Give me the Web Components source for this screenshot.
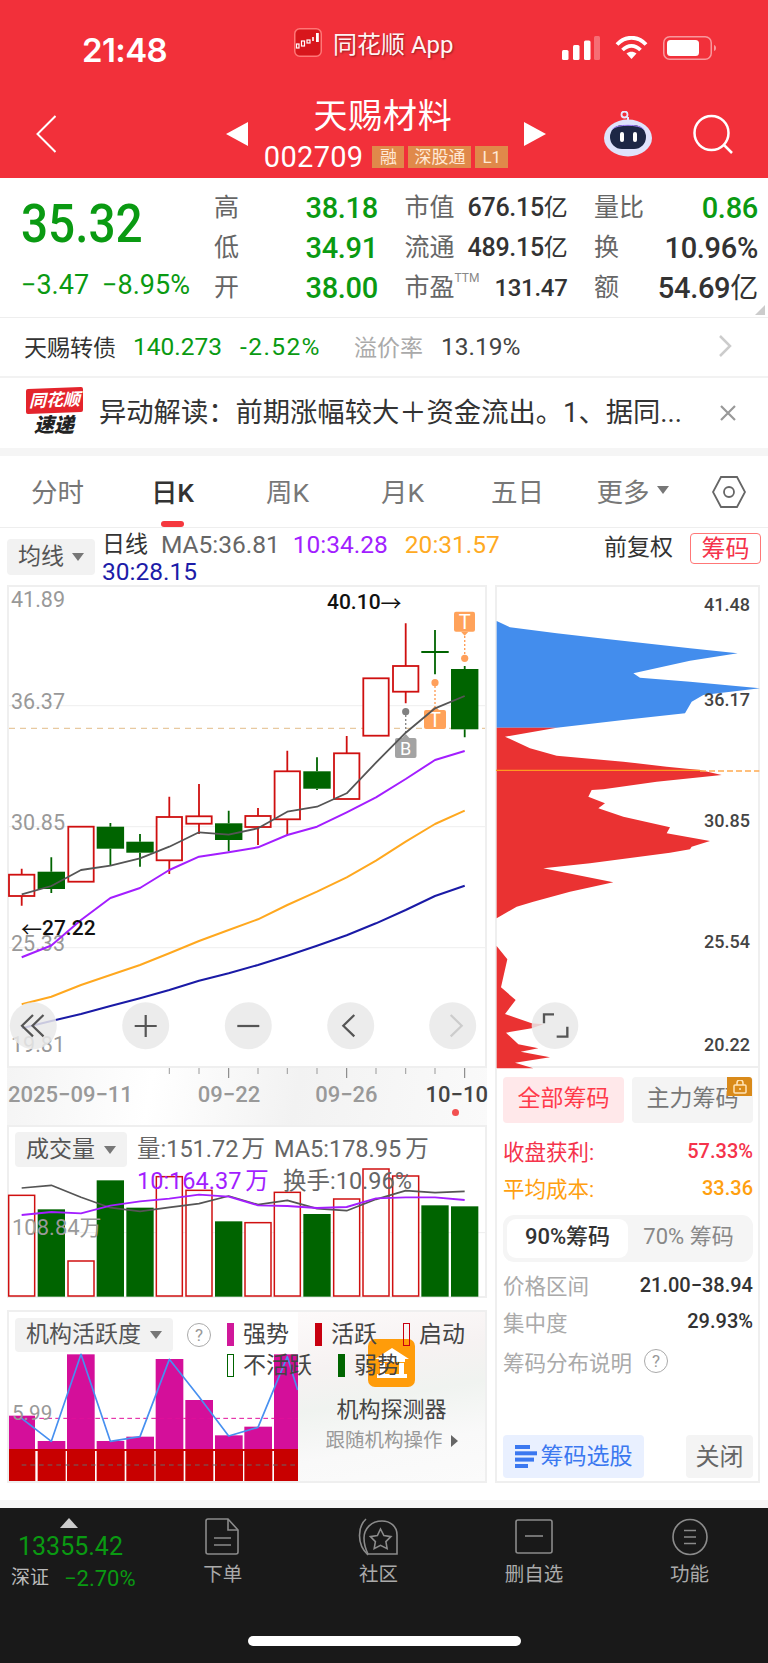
<!DOCTYPE html>
<html lang="zh">
<head>
<meta charset="utf-8">
<title>天赐材料</title>
<style>
  html, body { margin: 0; padding: 0; }
  body {
    width: 768px;
    height: 1663px;
    overflow: hidden;
    background: #fff;
    color: #333;
    font-family: Roboto, "Noto Sans CJK SC", sans-serif;
  }
  .charts {
    display: grid;
    grid-template-columns: 480px 265px;
    column-gap: 8px;
    padding-left: 7px;
    height: 915px;
    box-sizing: border-box;
  }
  .charts .left, .charts .right { display: flex; flex-direction: column; }
  .gap { display: block; height: 8px; background: #f5f5f5; }
</style>
</head>
<body>
<app-header></app-header>
<quote-panel></quote-panel>
<bond-row></bond-row>
<news-banner></news-banner>
<span class="gap"></span>
<period-tabs>
  <period-tab>分时</period-tab>
  <period-tab active>日K</period-tab>
  <period-tab>周K</period-tab>
  <period-tab>月K</period-tab>
  <period-tab>五日</period-tab>
  <period-tab more>更多</period-tab>
</period-tabs>
<ma-legend></ma-legend>
<div class="charts">
  <div class="left">
    <kline-chart></kline-chart>
    <date-axis></date-axis>
    <volume-chart></volume-chart>
    <activity-chart></activity-chart>
  </div>
  <div class="right">
    <chip-chart></chip-chart>
    <chip-panel></chip-panel>
  </div>
</div>
<span class="gap"></span>
<bottom-bar>
  <bar-item label="下单">
    <svg width="36" height="38" viewBox="0 0 36 38" fill="none" stroke="#8b8b8b" stroke-width="1.6">
      <path d="M3 1h20l10 11v22a2 2 0 0 1-2 2H3a2 2 0 0 1-2-2V3a2 2 0 0 1 2-2z"/><path d="M23 1v11h10"/><path d="M9 20h17M9 27h17"/>
    </svg>
  </bar-item>
  <bar-item label="社区">
    <svg width="42" height="38" viewBox="0 0 42 38" fill="none" stroke="#8b8b8b" stroke-width="1.6">
      <path d="M9 1C1 8-1 26 11 37"/><path d="M11 36h29V17C40 8 33 3 25 3 14 3 7 11 7 20c0 7 2 12 4 16z"/>
      <path d="M23.5 11l3.4 6.6 7 1-5 5 1.2 7-6.600-3.300-6.300 3.300 1.200-7-5-5 7-1z"/>
    </svg>
  </bar-item>
  <bar-item label="删自选">
    <svg width="38" height="36" viewBox="0 0 38 36" fill="none" stroke="#8b8b8b" stroke-width="1.6">
      <rect x="1" y="1" width="36" height="33" rx="2"/><path d="M10 17h18"/>
    </svg>
  </bar-item>
  <bar-item label="功能">
    <svg width="36" height="38" viewBox="0 0 36 38" fill="none" stroke="#8b8b8b" stroke-width="1.6">
      <ellipse cx="18" cy="19" rx="17" ry="17.500"/><path d="M12 12.500h12M12 19h12M12 25.500h12"/>
    </svg>
  </bar-item>
</bottom-bar>

<script>
const UP = '#cf1010';
const DOWN = '#006400';
const STEP = [21.7, 51.3, 81, 110.4, 140, 169.3, 199, 228.7, 258, 287.3, 317, 346.7, 376, 405.7, 435, 464.7];

function line(xs, ys, color, width) {
    const pts = xs.map((x, i) => x + ',' + ys[i]).join(' ');
    return `<polyline points="${pts}" fill="none" stroke="${color}" stroke-width="${width}" stroke-linejoin="round"/>`;
}

class AppHeader extends HTMLElement {
    connectedCallback() {
        this.attachShadow({ mode: 'open' });
        this.render();
    }

    render() {
        this.shadowRoot.innerHTML = `
            <style>
                :host { display: block; height: 178px; background: #f2303a; color: #fff; }
                .status { display: flex; align-items: center; height: 90px; padding: 10px 0 0 82px; box-sizing: border-box; }
                .time { width: 212px; font: 600 33px Inter, Roboto, sans-serif; letter-spacing: -0.6px; }
                .app { width: 268px; display: flex; align-items: center; gap: 11px; margin-top: -16px; }
                .app span { font-size: 24px; text-shadow: 1px 1px 2px rgba(0,0,0,.4); opacity: .95; }
                .sys { display: flex; align-items: center; gap: 15px; margin-top: -4px; }
                .nav { display: flex; height: 88px; padding-left: 36px; align-items: center; box-sizing: border-box; }
                .title { align-self: flex-start; width: 276px; text-align: center; margin-top: 6px; }
                .name { font-size: 34px; line-height: 40px; padding-right: 6px; letter-spacing: .8px; }
                .code { display: flex; justify-content: center; align-items: center; gap: 4px; margin-top: 10px; height: 22px; }
                .code b { font: 400 29px Roboto, sans-serif; margin-right: 5px; letter-spacing: .3px; }
                .tag { background: #e0894a; color: #ffe9d6; font-size: 17px; line-height: 22px; padding: 0 6px; }
            </style>
            <div class="status">
                <div class="time">21:48</div>
                <div class="app">
                    <svg width="28" height="29" viewBox="0 0 28 29">
                        <rect x=".75" y=".75" width="26.500" height="27.500" rx="5" fill="#d8161c" stroke="#f77" stroke-width="1.500"/>
                        <g fill="none" stroke="#fff" stroke-width="1.200">
                            <rect x="2.500" y="16" width="2.500" height="4"/><rect x="7.500" y="13" width="3" height="5"/><rect x="13" y="12" width="3" height="3"/>
                        </g>
                        <path d="M19 13v-4" stroke="#fff" stroke-width="1.600"/>
                        <rect x="22" y="5" width="2.800" height="9" fill="#fff"/>
                    </svg>
                    <span>同花顺 App</span>
                </div>
                <div class="sys">
                    <svg width="38" height="24" viewBox="0 0 38 24" fill="#fff">
                        <rect x="0" y="14" width="6.500" height="10" rx="1.500"/>
                        <rect x="11" y="9" width="6.500" height="15" rx="1.500"/>
                        <rect x="22" y="4.500" width="6.500" height="19.500" rx="1.500"/>
                        <rect x="32" y="0" width="6" height="24" rx="1.500" opacity=".3"/>
                    </svg>
                    <svg width="33" height="24" viewBox="0 0 33 24" fill="none" stroke="#fff" stroke-width="3.800">
                        <path d="M2 8.500C10-.5 23-.5 31 8.500"/>
                        <path d="M7.500 14c5.500-5.500 12.500-5.500 18 0"/>
                        <path d="M16.500 23l5-5.500c-3-2.500-7-2.500-10 0z" fill="#fff" stroke="none"/>
                    </svg>
                    <svg width="53" height="24" viewBox="0 0 53 24">
                        <rect x=".75" y=".75" width="47.500" height="22.500" rx="6" fill="none" stroke="#fff" stroke-opacity=".5" stroke-width="1.500"/>
                        <rect x="4" y="4" width="32" height="16" rx="3.500" fill="#fff"/>
                        <path d="M51 9c1.500.5 2 1.500 2 3s-.5 2.500-2 3z" fill="#fff" fill-opacity=".5"/>
                    </svg>
                </div>
            </div>
            <div class="nav">
                <svg width="20" height="38" viewBox="0 0 20 38" fill="none" stroke="#fff" stroke-width="2">
                    <path d="M19.500 1L1.500 19l18 18"/>
                </svg>
                <svg style="margin-left:170px" width="22" height="24" viewBox="0 0 22 24" fill="#fff"><path d="M22 0v24L0 12z"/></svg>
                <div class="title">
                    <div class="name">天赐材料</div>
                    <div class="code"><b>002709</b><span class="tag" style="padding:0 7.500px">融</span><span class="tag">深股通</span><span class="tag" style="padding:0 7px">L1</span></div>
                </div>
                <svg width="22" height="24" viewBox="0 0 22 24" fill="#fff"><path d="M0 0v24l22-12z"/></svg>
                <svg style="margin-left:58px" width="48" height="46" viewBox="0 0 48 46">
                    <path d="M24 10V6" stroke="#e5e8ff" stroke-width="2" fill="none"/>
                    <circle cx="20.500" cy="3.500" r="3" fill="none" stroke="#e5e8ff" stroke-width="1.800"/>
                    <ellipse cx="24" cy="27" rx="24" ry="18.500" fill="#dfe3fb"/>
                    <rect x="6" y="14" width="36" height="24" rx="12" fill="#1d2745"/>
                    <path d="M8.500 18c5-5 26-5 31 0" fill="none" stroke="#a883ff" stroke-width="1"/>
                    <rect x="16" y="21" width="4" height="10" rx="2" fill="#fff"/>
                    <rect x="29" y="21" width="4" height="10" rx="2" fill="#fff"/>
                </svg>
                <svg style="margin-left:41px" width="40" height="40" viewBox="0 0 40 40" fill="none" stroke="#fff" stroke-width="2.500">
                    <circle cx="18.500" cy="19" r="17"/><path d="M31 31l8 8"/>
                </svg>
            </div>
        `;
    }
}

class StatCell extends HTMLElement {
    connectedCallback() {
        this.attachShadow({ mode: 'open' });
        this.render();
    }

    render() {
        const label = this.getAttribute('label') || '';
        const color = this.getAttribute('color') || '#333';
        const size = this.getAttribute('size') || '29';
        this.shadowRoot.innerHTML = `
            <style>
                :host { display: flex; align-items: center; justify-content: space-between; height: 40px; }
                .label { font-size: 25px; line-height: 36px; color: #666; }
                .value { font-size: ${size}px; line-height: 36px; font-weight: 500; color: ${color}; letter-spacing: -0.3px; }
                ::slotted(sup) { font-size: 12px; line-height: 0; font-weight: 400; color: #888; vertical-align: 14px; margin-right: 12px; }
                ::slotted(small) { font-size: ${parseInt(size) - 1}px; font-weight: 400; }
            </style>
            <span class="label">${label}<slot name="note"></slot></span>
            <span class="value"><slot></slot></span>
        `;
    }
}

class QuotePanel extends HTMLElement {
    connectedCallback() {
        this.attachShadow({ mode: 'open' });
        this.render();
    }

    render() {
        this.shadowRoot.innerHTML = `
            <style>
                :host { display: flex; position: relative; height: 140px; box-sizing: border-box; border-bottom: 1px solid #eee; padding: 10px 0 0 21px; }
                .left { width: 193px; color: #0a9a12; }
                .price { font-size: 53px; font-weight: 500; line-height: 60px; margin-top: 6px; transform: scaleX(.9); transform-origin: left; }
                .chg { display: flex; gap: 13px; font-size: 27px; font-weight: 400; margin-top: 14px; line-height: 34px; }
                .grid { display: grid; grid-template-columns: 164px 163px 164px; grid-auto-rows: 40px; align-content: start; column-gap: 26.500px; }
                .corner { position: absolute; right: 3px; bottom: 2px; width: 0; height: 0; border-left: 10px solid transparent; border-bottom: 10px solid #ccc; }
            </style>
            <div class="left">
                <div class="price">35.32</div>
                <div class="chg"><span>−3.47</span><span>−8.95%</span></div>
            </div>
            <div class="grid">
                <stat-cell label="高" color="#0a9a12">38.18</stat-cell>
                <stat-cell label="市值" size="25">676.15<small>亿</small></stat-cell>
                <stat-cell label="量比" color="#0a9a12">0.86</stat-cell>
                <stat-cell label="低" color="#0a9a12">34.91</stat-cell>
                <stat-cell label="流通" size="25">489.15<small>亿</small></stat-cell>
                <stat-cell label="换">10.96%</stat-cell>
                <stat-cell label="开" color="#0a9a12">38.00</stat-cell>
                <stat-cell label="市盈" size="24"><sup slot="note">TTM</sup>131.47</stat-cell>
                <stat-cell label="额">54.69<small>亿</small></stat-cell>
            </div>
            <i class="corner"></i>
        `;
    }
}

class BondRow extends HTMLElement {
    connectedCallback() {
        this.attachShadow({ mode: 'open' });
        this.render();
    }

    render() {
        this.shadowRoot.innerHTML = `
            <style>
                :host { display: flex; align-items: center; height: 60px; box-sizing: border-box; padding: 0 36px 2px 24px; border-bottom: 2px solid #f2f2f2; font-size: 23px; }
                .num { font-size: 24.500px; color: #0a9a12; }
                .muted { color: #aaa; font-size: 23px; margin-left: 33px; }
                .rate { font-size: 24.500px; color: #444; margin-left: 18px; flex: 1; }
            </style>
            <span>天赐转债</span>
            <span class="num" style="margin-left:17px">140.273</span>
            <span class="num" style="margin-left:18px;letter-spacing:1.400px">-2.52%</span>
            <span class="muted">溢价率</span>
            <span class="rate">13.19%</span>
            <svg width="14" height="22" viewBox="0 0 14 22" fill="none" stroke="#ccc" stroke-width="2.500"><path d="M2 1l10 10L2 21"/></svg>
        `;
    }
}

class NewsBanner extends HTMLElement {
    connectedCallback() {
        this.attachShadow({ mode: 'open' });
        this.render();
    }

    render() {
        this.shadowRoot.innerHTML = `
            <style>
                :host { display: flex; align-items: center; height: 70px; box-sizing: border-box; padding-left: 25px; }
                .logo { width: 58px; height: 50px; display: flex; flex-direction: column; align-items: center; }
                .tag { width: 57px; height: 25px; background: #e4242c; color: #fff; font-size: 17px; font-weight: 700; font-style: italic; line-height: 25px; text-align: center; border-radius: 2px; transform: skewY(-2deg); white-space: nowrap; }
                .sub { font-size: 20px; line-height: 24px; font-weight: 900; font-style: italic; color: #222; }
                .text { margin-left: 16px; width: 601px; font-size: 27.300px; line-height: 36px; margin-top: -1px; color: #333; white-space: nowrap; }
            </style>
            <div class="logo"><div class="tag">同花顺</div><div class="sub">速递</div></div>
            <div class="text">异动解读：前期涨幅较大＋资金流出。1、据同...</div>
            <svg style="margin-left:20px" width="16" height="16" viewBox="0 0 16 16" fill="none" stroke="#999" stroke-width="2.200"><path d="M1 1l14 14M15 1L1 15"/></svg>
        `;
    }
}

class PeriodTab extends HTMLElement {
    connectedCallback() {
        this.attachShadow({ mode: 'open' });
        this.render();
    }

    render() {
        const active = this.hasAttribute('active');
        const more = this.hasAttribute('more');
        this.shadowRoot.innerHTML = `
            <style>
                :host { display: flex; align-items: center; justify-content: center; gap: 7px; position: relative; font-size: 26.500px; padding-bottom: 3px; color: ${active ? '#333' : '#777'}; font-weight: ${active ? 500 : 400}; }
                .bar { position: absolute; left: 46px; bottom: 0; width: 23px; height: 6px; border-radius: 3px; background: #f5383e; }
                .arrow { width: 0; height: 0; border: 6px solid transparent; border-top: 8px solid #777; border-bottom: 0; }
            </style>
            <slot></slot>
            ${more ? '<i class="arrow"></i>' : ''}
            ${active ? '<i class="bar"></i>' : ''}
        `;
    }
}

class PeriodTabs extends HTMLElement {
    connectedCallback() {
        this.attachShadow({ mode: 'open' });
        this.render();
    }

    render() {
        this.shadowRoot.innerHTML = `
            <style>
                :host { display: grid; grid-template-columns: repeat(6, 115px) 1fr; height: 72px; box-sizing: border-box; border-bottom: 1px solid #eee; }
                svg { align-self: center; margin: 0 0 0 22px; }
            </style>
            <slot></slot>
            <svg width="34" height="32" viewBox="0 0 34 32" fill="none" stroke="#666" stroke-width="1.800">
                <path d="M9 1h16l8 15-8 15H9L1 16z"/><circle cx="17" cy="16" r="5"/>
            </svg>
        `;
    }
}

class MaLegend extends HTMLElement {
    connectedCallback() {
        this.attachShadow({ mode: 'open' });
        this.render();
    }

    render() {
        this.shadowRoot.innerHTML = `
            <style>
                :host { display: flex; height: 57px; box-sizing: border-box; padding-left: 7px; font-size: 24.500px; }
                .pick { margin-top: 11px; width: 88px; height: 36px; background: #f2f2f2; border-radius: 4px; display: flex; align-items: center; justify-content: center; gap: 8px; color: #555; font-size: 23px; line-height: 30px; }
                .pick i { width: 0; height: 0; border: 6px solid transparent; border-top: 8px solid #777; border-bottom: 0; }
                .vals { margin-left: 7px; width: 502px; display: flex; flex-wrap: wrap; column-gap: 13px; line-height: 27px; padding-top: 3px; align-content: flex-start; box-sizing: border-box; }
                .fq { width: 86px; margin-top: 6px; line-height: 27px; color: #333; }
                .chip { margin-top: 5px; width: 71px; height: 31px; box-sizing: border-box; border: 1.500px solid #f77; border-radius: 4px; color: #f5334b; display: flex; align-items: center; justify-content: center; font-size: 24px; line-height: 28px; }
            </style>
            <div class="pick">均线<i></i></div>
            <div class="vals">
                <span style="color:#333;font-size:23px">日线</span>
                <span style="color:#666">MA5:36.81</span>
                <span style="color:#a21eff">10:34.28</span>
                <span style="color:#ffaa22;margin-left:4px">20:31.57</span>
                <span style="color:#1c1ca8;width:200px">30:28.15</span>
            </div>
            <div class="fq" style="font-size:23px">前复权</div>
            <div class="chip">筹码</div>
        `;
    }
}

class KlineChart extends HTMLElement {
    connectedCallback() {
        this.attachShadow({ mode: 'open' });
        this.render();
    }

    candles() {
        // top, bottom, wick top, wick bottom, up?
        const data = [
            [874.7, 896, 868.7, 905.7, 1], [871.7, 889, 857.3, 893, 0], [826.7, 881.7, 826.7, 881.7, 1],
            [826.7, 848.7, 823, 865, 0], [841.7, 852.7, 834, 866.7, 0], [817, 860.3, 796.7, 874, 1],
            [816.3, 823.7, 784, 834, 1], [823.3, 840, 810.7, 851.3, 0], [816, 827, 808, 845, 1],
            [771.3, 819.3, 750.7, 835, 1], [771.3, 788.7, 757.3, 790, 0], [753.3, 799, 736, 799, 1],
            [678.3, 735.7, 678.3, 735.7, 1], [666, 691.7, 623.3, 703.3, 1], [651, 653, 630, 674.3, 0],
            [669, 729.3, 666, 737.3, 0]
        ];
        return data.map((d, i) => {
            const x = STEP[i];
            const c = d[4] ? UP : DOWN;
            const wick = `<path d="M${x} ${d[2]}V${d[0]}M${x} ${d[1]}V${d[3]}" stroke="${c}" stroke-width="1.800"/>`;
            const body = d[4]
                ? `<rect x="${x - 12.7}" y="${d[0]}" width="25.400" height="${d[1] - d[0]}" fill="#fff" stroke="${c}" stroke-width="1.800"/>`
                : `<rect x="${x - 13.700}" y="${d[0]}" width="27.400" height="${d[1] - d[0]}" fill="${c}"/>`;
            return wick + body;
        }).join('');
    }

    render() {
        const ma5 = [894.3, 886, 870, 865.7, 858.3, 846.7, 832.3, 834.7, 828.3, 811.7, 806.7, 793.3, 762.7, 732.7, 708.3, 696];
        const ma10 = [957.3, 945.5, 920, 898, 888, 870, 856.7, 852.3, 847.3, 835, 826.7, 812.3, 797.3, 779, 760, 751];
        const ma20 = [1004.3, 996.7, 985, 975, 965, 953.3, 941, 930, 919.3, 905, 891.7, 877.3, 860.7, 841.7, 824, 810.7];
        const ma30 = [1028.3, 1021, 1014, 1006, 998.3, 990, 980.7, 973.3, 965, 955.7, 945.7, 935.3, 923.3, 910, 896, 885.7];
        const axis = [['41.89', 599], ['36.37', 701], ['30.85', 822], ['25.33', 943], ['19.81', 1044]];
        const btn = [33.3, 145.7, 248.3, 350.7, 452.7];
        this.shadowRoot.innerHTML = `
            <style>
                :host { display: block; height: 483px; box-sizing: border-box; border: 2px solid #efefef; }
                svg { display: block; overflow: visible; font-family: Roboto, "Noto Sans CJK SC", sans-serif; }
            </style>
            <svg width="476" height="479" viewBox="9 587 476 479">
                <path d="M9 705.700H485M9 826.700H485M9 947.700H485" stroke="#eee" stroke-width="1"/>
                <path d="M9 728.300H485" stroke="#e8c9a0" stroke-width="1.200" stroke-dasharray="6 5"/>
                ${axis.map(a => `<text x="11" y="${a[1]}" dominant-baseline="central" font-size="21.500" fill="#999">${a[0]}</text>`).join('')}
                ${this.candles()}
                <g fill="none" stroke-dasharray="2 2" stroke-width="1.400">
                    <path d="M464.700 632V655" stroke="#ff9f5a"/><path d="M435 686V708" stroke="#ff9f5a"/><path d="M405.700 715V738" stroke="#888"/>
                </g>
                <circle cx="464.700" cy="658.300" r="3.600" fill="#ff9f5a"/>
                <circle cx="435" cy="682.700" r="3.600" fill="#ff9f5a"/>
                <circle cx="405.700" cy="711.700" r="3.600" fill="#808080"/>
                <g>
                    <rect x="424" y="710" width="22" height="19" rx="2" fill="#ffa25a"/><path d="M431 710l4-4 4 4z" fill="#ffa25a"/>
                    <text x="435" y="719.500" text-anchor="middle" dominant-baseline="central" font-size="20" fill="#fff">T</text>
                    <rect x="454" y="611.700" width="21" height="20" rx="2" fill="#ffa25a"/><path d="M461 631.700l3.700 4 3.700-4z" fill="#ffa25a"/>
                    <text x="464.700" y="622" text-anchor="middle" dominant-baseline="central" font-size="20" fill="#fff">T</text>
                    <rect x="395" y="738" width="21.500" height="20" rx="2" fill="#a3a3a3"/><path d="M402 738l3.700-4 3.700 4z" fill="#a3a3a3"/>
                    <text x="405.700" y="748" text-anchor="middle" dominant-baseline="central" font-size="18" fill="#fff">B</text>
                </g>
                ${line(STEP, ma30, '#1a1aa6', 2)}
                ${line(STEP, ma20, '#ffa81f', 2)}
                ${line(STEP, ma10, '#a31eff', 2)}
                ${line(STEP, ma5, '#555', 1.8)}
                <text x="327" y="602" dominant-baseline="central" font-size="21" font-weight="500" fill="#111">40.10<tspan font-family="Noto Sans CJK SC" font-weight="400">→</tspan></text>
                <text x="21" y="928" dominant-baseline="central" font-size="21" font-weight="500" fill="#111"><tspan font-family="Noto Sans CJK SC" font-weight="400">←</tspan>27.22</text>
                ${btn.map(x => `<circle cx="${x}" cy="1025.700" r="23.500" fill="#e9e9e9" fill-opacity=".85"/>`).join('')}
                <g fill="none" stroke="#555" stroke-width="2.200">
                    <path d="M33 1015l-11 10.700 11 10.700M43.500 1015l-11 10.700 11 10.700"/>
                    <path d="M145.700 1015v22M134.700 1026h22"/>
                    <path d="M237.300 1026h22"/>
                    <path d="M354.300 1015l-11 10.700 11 10.700"/>
                    <path d="M450.700 1015l11 10.700-11 10.700" stroke="#ccc"/>
                </g>
            </svg>
        `;
    }
}

class DateAxis extends HTMLElement {
    connectedCallback() {
        this.attachShadow({ mode: 'open' });
        this.render();
    }

    render() {
        const ticks = STEP.slice(5).map((x, i) => {
            const tall = i === 2 || i === 6 || i === 10;
            return `<path d="M${x} 0V${tall ? 10 : 6}" stroke="${tall ? '#777' : '#999'}" stroke-width="1"/>`;
        }).join('');
        this.shadowRoot.innerHTML = `
            <style>
                :host { display: block; height: 57px; background: linear-gradient(100deg, #f4f4f4, #fff 30%, #f2f2f2 60%, #fafafa); }
                svg { display: block; }
                .row { display: flex; font-size: 22px; font-weight: 500; color: #999; line-height: 30px; margin-top: 2px; white-space: nowrap; }
                .dot { width: 7px; height: 7px; border-radius: 50%; background: #f25050; margin: -1px 0 0 445px; }
            </style>
            <svg width="480" height="10" viewBox="7 0 480 10">${ticks}</svg>
            <div class="row">
                <span style="margin-left:1px">2025−09−11</span>
                <span style="margin-left:65px">09−22</span>
                <span style="margin-left:55px">09−26</span>
                <span style="margin-left:48px;color:#444">10−10</span>
            </div>
            <div class="dot"></div>
        `;
    }
}

class VolumeChart extends HTMLElement {
    connectedCallback() {
        this.attachShadow({ mode: 'open' });
        this.render();
    }

    render() {
        const xs = [65, 154, 243, 331, 420, 508, 597, 686, 774, 862, 951, 1040, 1128, 1217, 1305, 1394];
        const tops = [226, 268, 423, 181, 263, 170, 211, 304, 308, 217, 282, 237, 147, 168, 256, 259];
        const up = [1, 0, 1, 0, 0, 1, 1, 0, 1, 1, 0, 1, 1, 1, 0, 0];
        const ma5 = [204, 196, 232, 263, 274, 262, 251, 228, 254, 241, 266, 272, 238, 212, 218, 214];
        const ma10 = [285, 276, 280, 257, 244, 236, 224, 230, 256, 258, 264, 261, 235, 232, 232, 240];
        const bars = xs.map((x, i) => up[i]
            ? `<rect x="${x - 39}" y="${tops[i]}" width="78" height="${528 - tops[i]}" fill="#fff" stroke="${UP}" stroke-width="4.500"/>`
            : `<rect x="${x - 41}" y="${tops[i]}" width="82" height="${530 - tops[i]}" fill="${DOWN}"/>`).join('');
        this.shadowRoot.innerHTML = `
            <style>
                :host { display: block; position: relative; height: 173px; box-sizing: border-box; border: 2px solid #efefef; font-size: 23.500px; }
                svg { display: block; overflow: visible; }
                .pick { position: absolute; left: 6px; top: 5px; width: 112px; height: 35px; background: #f2f2f2; border-radius: 4px; display: flex; align-items: center; justify-content: center; gap: 9px; color: #555; font-size: 23px; line-height: 30px; }
                .pick i { width: 0; height: 0; border: 6px solid transparent; border-top: 8px solid #777; border-bottom: 0; }
                .txt { position: absolute; white-space: pre; line-height: 28px; color: #666; }
                .ref { left: 3px; top: 87px; color: #999; font-size: 22px; }
            </style>
            <svg width="476" height="169" viewBox="27 21 1428 507">
                <path d="M27 338H1455" stroke="#eee" stroke-width="3"/>
                ${bars}
                ${line(xs, ma5, '#555', 5)}
                ${line(xs, ma10, '#a31eff', 5.5)}
            </svg>
            <div class="pick">成交量<i></i></div>
            <div class="txt" style="left:128px;top:8px">量:151.72<span style="margin-left:3px">万</span></div>
            <div class="txt" style="left:265px;top:8px">MA5:178.95<span style="margin-left:4px">万</span></div>
            <div class="txt" style="left:128px;top:40px;color:#a21eff">10:164.37<span style="margin-left:4px">万</span></div>
            <div class="txt" style="left:274px;top:40px">换手:10.96%</div>
            <div class="txt ref">108.84万</div>
        `;
    }
}

class HelpMark extends HTMLElement {
    connectedCallback() {
        this.attachShadow({ mode: 'open' });
        this.render();
    }

    render() {
        this.shadowRoot.innerHTML = `
            <style>
                :host { display: inline-flex; align-items: center; justify-content: center; width: 24px; height: 24px; box-sizing: border-box; border: 1.800px solid #aaa; border-radius: 50%; color: #999; font-size: 17px; line-height: 1; }
            </style>?
        `;
    }
}

class LegendKey extends HTMLElement {
    connectedCallback() {
        this.attachShadow({ mode: 'open' });
        this.render();
    }

    render() {
        const color = this.getAttribute('color');
        const hollow = this.hasAttribute('hollow');
        this.shadowRoot.innerHTML = `
            <style>
                :host { display: inline-flex; align-items: center; gap: 9px; font-size: 23px; color: #444; line-height: 31px; }
                i { width: 7px; height: 23px; box-sizing: border-box; background: ${hollow ? 'transparent' : color}; border: 1.500px solid ${color}; }
            </style>
            <i></i><slot></slot>
        `;
    }
}

class ActivityChart extends HTMLElement {
    connectedCallback() {
        this.attachShadow({ mode: 'open' });
        this.render();
    }

    render() {
        const lefts = [22, 113, 201, 290, 379, 467, 556, 645, 733, 822];
        const tops = [347, 423, 163, 423, 410, 177, 300, 406, 380, 163];
        const lx = [65, 154, 243, 331, 420, 508, 597, 686, 774, 862, 893];
        const ly = [355, 424, 163, 424, 410, 178, 290, 408, 382, 170, 270];
        const mag = lefts.map((x, i) => `<rect x="${x}" y="${tops[i]}" width="83" height="${447 - tops[i]}" fill="#d40f9a"/>`).join('');
        const red = lefts.map(x => `<rect x="${x}" y="452" width="84" height="96" fill="#c80000"/>`).join('');
        this.shadowRoot.innerHTML = `
            <style>
                :host { display: block; position: relative; height: 173px; margin-top: 12px; box-sizing: border-box; border: 2px solid #efefef; overflow: hidden; }
                svg { display: block; overflow: visible; font-family: Roboto, sans-serif; }
                .panel { position: absolute; left: 289px; top: 0; right: 0; bottom: 0; background: linear-gradient(170deg, #fdfafa, #f6f2f2 30%, #f0f3f0 50%, #f9f9f9 75%, #fbfbfb); display: flex; flex-direction: column; align-items: center; padding-top: 27px; box-sizing: border-box; }
                .house { width: 47px; height: 48px; border-radius: 7px; background: #ff9c0a; display: flex; align-items: center; justify-content: center; }
                .pt { font-size: 22px; color: #444; margin-top: 7px; line-height: 32px; }
                .ps { font-size: 19.500px; color: #999; line-height: 26px; margin-top: 2px; display: flex; align-items: center; gap: 8px; }
                .ps i { width: 0; height: 0; border: 6px solid transparent; border-left: 7px solid #666; border-right: 0; }
                .head { position: absolute; left: 6px; top: 6px; display: flex; align-items: center; }
                .pick { width: 158px; height: 34px; background: #f2f2f2; border-radius: 4px; display: flex; align-items: center; justify-content: center; gap: 9px; color: #555; font-size: 23px; line-height: 30px; }
                .pick i { width: 0; height: 0; border: 6px solid transparent; border-top: 8px solid #777; border-bottom: 0; }
                .legend { position: absolute; left: 218px; top: 7px; width: 256px; display: flex; flex-wrap: wrap; }
                .legend legend-key { margin-right: 26px; }
                help-mark { margin-left: 14px; }
            </style>
            <svg width="476" height="169" viewBox="27 36 1428 507">
                ${mag}
                <rect x="22" y="447" width="880" height="6" fill="#c80000"/>
                ${red}
                <path d="M22 355H900" stroke="#e0109a" stroke-width="3" stroke-dasharray="14 10"/>
                <path d="M65 495H900" stroke="#666" stroke-width="3.500" stroke-dasharray="14 12"/>
                ${line(lx, ly, '#4790f0', 5)}
                <text x="36" y="339" dominant-baseline="central" font-size="62" fill="#999">5.99</text>
            </svg>
            <div class="panel">
                <div class="house">
                    <svg width="34" height="32" viewBox="0 0 34 32" fill="#fff"><path d="M17 1L0 12h4v3h26v-3h4z"/><path d="M5 16h5v11H5zM24 16h5v11h-5z"/><rect x="2" y="27" width="30" height="4"/></svg>
                </div>
                <div class="pt">机构探测器</div>
                <div class="ps">跟随机构操作<i></i></div>
            </div>
            <div class="head"><div class="pick">机构活跃度<i></i></div><help-mark></help-mark></div>
            <div class="legend">
                <legend-key color="#d0189a">强势</legend-key>
                <legend-key color="#c80010">活跃</legend-key>
                <legend-key color="#c80010" hollow style="margin-right:0">启动</legend-key>
                <legend-key color="#006400" hollow>不活跃</legend-key>
                <legend-key color="#006400">弱势</legend-key>
            </div>
        `;
    }
}

class ChipChart extends HTMLElement {
    connectedCallback() {
        this.attachShadow({ mode: 'open' });
        this.render();
    }

    render() {
        const blue = '20,123 60,142 200,160 350,177 600,205 743,220 600,242 430,280 450,293 600,305 810,325 640,345 605,365 585,400 400,420 200,443 20,443';
        const red = '20,443 200,443 45,470 120,505 200,527 400,545 530,560 630,570 695,585 500,605 340,628 305,630 295,650 345,670 325,685 400,710 540,742 530,760 660,783 605,800 600,808 540,818 300,850 160,865 370,907 240,935 130,965 80,980 20,1015';
        const tail = '20,1098 52,1138 33,1222 77,1260 45,1302 125,1330 160,1333 125,1345 48,1358 85,1393 145,1405 92,1415 180,1432 75,1448 130,1465 20,1465';
        const labels = [['41.48', 72], ['36.17', 357], ['30.85', 720], ['25.54', 1083], ['20.22', 1393]];
        this.shadowRoot.innerHTML = `
            <style>
                :host { display: block; height: 483px; box-sizing: border-box; border: 2px solid #efefef; }
                svg { display: block; overflow: visible; font-family: Roboto, sans-serif; }
            </style>
            <svg width="261" height="479" viewBox="21 21 783 1437">
                <polygon points="${blue}" fill="#438ded"/>
                <polygon points="${red}" fill="#ea3232"/>
                <polygon points="${tail}" fill="#ea3232"/>
                <path d="M18 571H630" stroke="#ff9a20" stroke-width="4"/>
                <path d="M630 573H808" stroke="#ffab50" stroke-width="4" stroke-dasharray="18 9"/>
                ${labels.map(l => `<text x="642" y="${l[1]}" dominant-baseline="central" font-size="54" font-weight="500" fill="#444">${l[0]}</text>`).join('')}
                <circle cx="195" cy="1337" r="70" fill="#e9e9e9" fill-opacity=".85"/>
                <path d="M192 1303H162V1330M232 1340V1370H200" fill="none" stroke="#555" stroke-width="7"/>
            </svg>
        `;
    }
}

class ChipRow extends HTMLElement {
    connectedCallback() {
        this.attachShadow({ mode: 'open' });
        this.render();
    }

    render() {
        const label = this.getAttribute('label') || '';
        const color = this.getAttribute('color') || '#aaa';
        const value = this.getAttribute('value-color') || '#333';
        const h = this.getAttribute('height') || '36';
        this.shadowRoot.innerHTML = `
            <style>
                :host { display: flex; align-items: center; justify-content: space-between; height: ${h}px; font-size: 21.500px; box-sizing: border-box; padding-bottom: 2px; }
                .l { color: ${color}; }
                .v { color: ${value}; font-size: 20px; font-weight: 500; }
            </style>
            <span class="l">${label}</span><span class="v"><slot></slot></span>
        `;
    }
}

class ChipPanel extends HTMLElement {
    connectedCallback() {
        this.attachShadow({ mode: 'open' });
        this.render();
    }

    render() {
        this.shadowRoot.innerHTML = `
            <style>
                :host { display: flex; flex-direction: column; height: 415px; box-sizing: border-box; padding: 9px 5px 3px 6px; border: solid #efefef; border-width: 0 2px 2px 2px; }
                .tabs { display: grid; grid-template-columns: 121px 121px; column-gap: 8px; height: 46px; }
                .tab { position: relative; display: flex; align-items: center; justify-content: center; font-size: 23px; line-height: 30px; background: #f4f4f4; color: #777; border-radius: 4px; padding-bottom: 2px; box-sizing: border-box; }
                .tab.on { background: #ffe8ea; color: #ff3a4a; }
                .lock { position: absolute; right: 1px; top: 0; width: 25px; height: 19px; background: #d98a1a; border-radius: 0 3px 0 0; display: flex; align-items: center; justify-content: center; }
                .rows { margin-top: 10px; margin-bottom: 8px; }
                .seg { display: grid; grid-template-columns: 121px 1fr; height: 47px; background: #f5f5f5; border-radius: 11px; padding: 4px; box-sizing: border-box; font-size: 22px; line-height: 30px; }
                .seg div { display: flex; align-items: center; justify-content: center; color: #888; padding-bottom: 3px; box-sizing: border-box; }
                .seg .on { background: #fff; border-radius: 9px; color: #333; font-weight: 500; }
                .info { margin-top: 5px; }
                .help { display: flex; align-items: center; gap: 12px; height: 36px; margin-top: 4px; font-size: 21.500px; color: #aaa; padding-bottom: 2px; box-sizing: border-box; }
                .foot { margin-top: auto; display: flex; justify-content: space-between; height: 43px; }
                .pick { width: 141px; background: #e9f0ff; color: #3b78f0; border-radius: 4px; display: flex; align-items: center; justify-content: center; gap: 4px; font-size: 23px; line-height: 30px; }
                .close { width: 67px; background: #f4f4f4; color: #666; border-radius: 4px; display: flex; align-items: center; justify-content: center; font-size: 24px; line-height: 30px; }
            </style>
            <div class="tabs">
                <div class="tab on">全部筹码</div>
                <div class="tab">主力筹码
                    <span class="lock">
                        <svg width="14" height="14" viewBox="0 0 14 14" fill="none" stroke="#ffe4b8" stroke-width="1.500"><rect x="1" y="5" width="12" height="8" rx="1"/><path d="M4 5V3a3 3 0 0 1 6 0v2"/><path d="M7 8v2"/></svg>
                    </span>
                </div>
            </div>
            <div class="rows">
                <chip-row height="37" label="收盘获利:" color="#f5334b" value-color="#f5334b">57.33%</chip-row>
                <chip-row height="37" label="平均成本:" color="#ffa010" value-color="#ffa010">33.36</chip-row>
            </div>
            <div class="seg"><div class="on">90%筹码</div><div>70% 筹码</div></div>
            <div class="info">
                <chip-row height="37" label="价格区间">21.00−38.94</chip-row>
                <chip-row label="集中度">29.93%</chip-row>
                <div class="help">筹码分布说明<help-mark></help-mark></div>
            </div>
            <div class="foot">
                <div class="pick">
                    <svg width="22" height="23" viewBox="0 0 22 23" fill="#3b78f0"><rect y="0" width="15" height="4"/><rect y="6.300" width="22" height="4"/><rect y="12.600" width="19" height="4"/><rect y="19" width="13" height="4"/></svg>
                    <span>筹码选股</span>
                </div>
                <div class="close">关闭</div>
            </div>
        `;
    }
}

class BarItem extends HTMLElement {
    connectedCallback() {
        this.attachShadow({ mode: 'open' });
        this.render();
    }

    render() {
        this.shadowRoot.innerHTML = `
            <style>
                :host { display: flex; flex-direction: column; align-items: center; width: 155.600px; padding-top: 10px; box-sizing: border-box; }
                .icon { height: 38px; display: flex; align-items: center; justify-content: center; }
                .label { color: #aaa; font-size: 19.500px; line-height: 26px; margin-top: 6px; }
            </style>
            <div class="icon"><slot></slot></div>
            <div class="label">${this.getAttribute('label')}</div>
        `;
    }
}

class BottomBar extends HTMLElement {
    connectedCallback() {
        this.attachShadow({ mode: 'open' });
        this.render();
    }

    render() {
        this.shadowRoot.innerHTML = `
            <style>
                :host { display: flex; flex-direction: column; height: 155px; background: #191919; }
                .top { display: flex; height: 128px; }
                .index { width: 145px; box-sizing: border-box; padding: 10px 0 0 11px; }
                .tri { width: 0; height: 0; margin-left: 49px; border: 9px solid transparent; border-bottom: 10px solid #ccc; border-top: 0; }
                .num { color: #0a9a12; font-size: 25px; line-height: 30px; margin: 4px 0 0 7px; }
                .sub { display: flex; align-items: center; gap: 15px; color: #bbb; font-size: 19px; line-height: 30px; margin-top: 1px; }
                .sub b { font: 400 22px Roboto, sans-serif; color: #0a9a12; }
                .items { display: flex; }
                .home { width: 273px; height: 10px; border-radius: 5px; background: #fff; margin-left: 248px; }
            </style>
            <div class="top">
                <div class="index">
                    <div class="tri"></div>
                    <div class="num">13355.42</div>
                    <div class="sub"><span>深证</span><b>−2.70%</b></div>
                </div>
                <div class="items"><slot></slot></div>
            </div>
            <div class="home"></div>
        `;
    }
}

customElements.define('app-header', AppHeader);
customElements.define('stat-cell', StatCell);
customElements.define('quote-panel', QuotePanel);
customElements.define('bond-row', BondRow);
customElements.define('news-banner', NewsBanner);
customElements.define('period-tab', PeriodTab);
customElements.define('period-tabs', PeriodTabs);
customElements.define('ma-legend', MaLegend);
customElements.define('kline-chart', KlineChart);
customElements.define('date-axis', DateAxis);
customElements.define('volume-chart', VolumeChart);
customElements.define('help-mark', HelpMark);
customElements.define('legend-key', LegendKey);
customElements.define('activity-chart', ActivityChart);
customElements.define('chip-chart', ChipChart);
customElements.define('chip-row', ChipRow);
customElements.define('chip-panel', ChipPanel);
customElements.define('bar-item', BarItem);
customElements.define('bottom-bar', BottomBar);
</script>
</body>
</html>
